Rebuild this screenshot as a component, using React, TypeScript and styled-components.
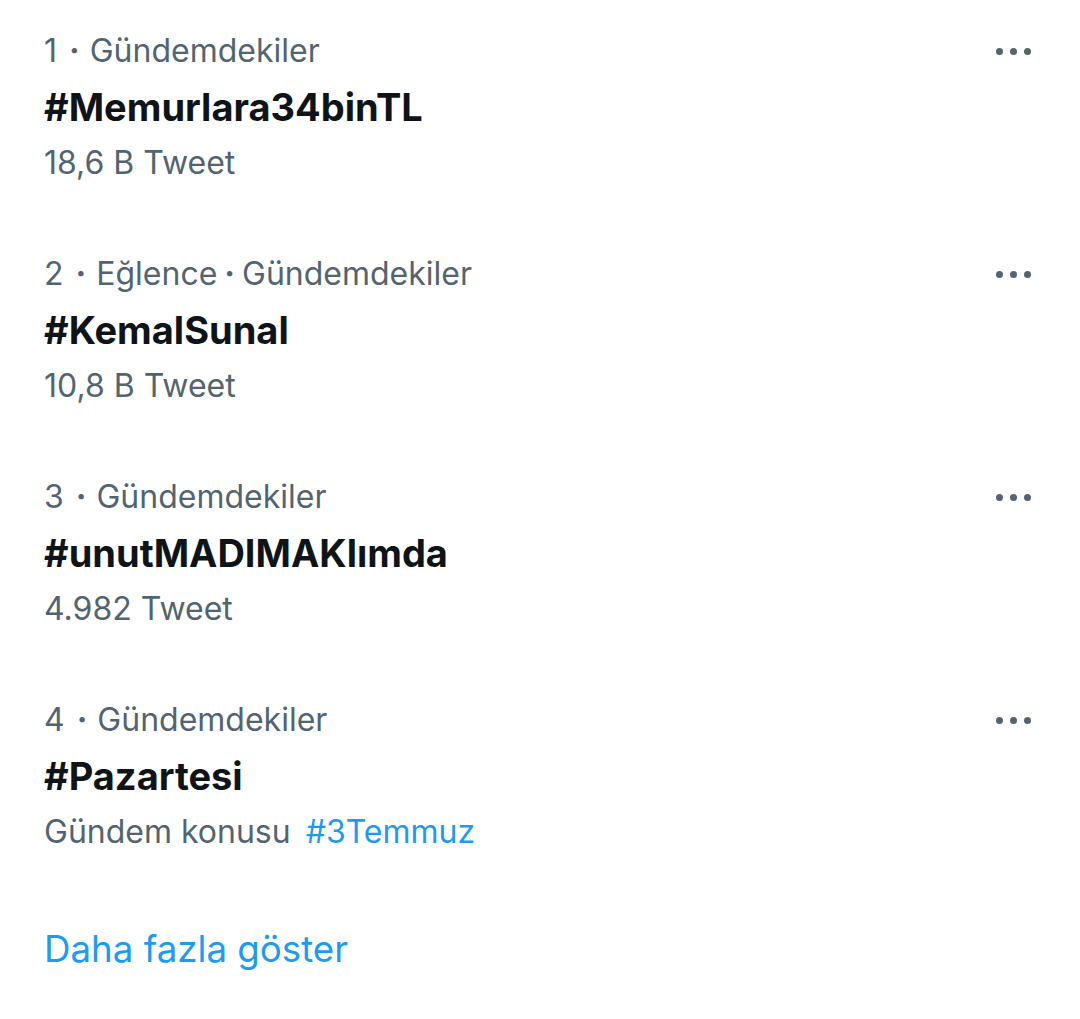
import React from "react";
import styled, { createGlobalStyle } from "styled-components";

const GlobalStyle = createGlobalStyle`
  html, body {
    margin: 0;
    padding: 0;
    background: #ffffff;
  }
  body {
    font-family: Inter, Roboto, "Liberation Sans", sans-serif;
    -webkit-font-smoothing: antialiased;
  }
`;

const Page = styled.div`
  width: 1080px;
  min-height: 1019px;
  background: #fff;
  box-sizing: border-box;
`;

const List = styled.ul`
  list-style: none;
  margin: 0;
  padding: 0;
`;

const TrendRow = styled.li`
  display: flex;
  align-items: flex-start;
  justify-content: space-between;
  padding: 23px 44px 32px 44px;
`;

const TrendBody = styled.div`
  display: flex;
  flex-direction: column;
`;

const Meta = styled.div`
  font-size: 32px;
  line-height: 56px;
  color: #536471;
  white-space: nowrap;
`;

const Sep = styled.span<{ $wide?: boolean }>`
  display: inline-block;
  font-weight: 700;
  margin: ${(p) => (p.$wide ? "0 10px 0 12px" : "0 7px")};
`;

const Title = styled.div`
  font-size: 38px;
  line-height: 56px;
  font-weight: 700;
  color: #0f1419;
  white-space: nowrap;
`;

const Topic = styled.span<{ $link?: boolean }>`
  color: ${(p) => (p.$link ? "#1d9bf0" : "#536471")};
  margin-left: ${(p) => (p.$link ? "15px" : "0")};
`;

const MoreButton = styled.button`
  display: flex;
  align-items: center;
  gap: 7px;
  height: 56px;
  padding: 0;
  margin-right: 5px;
  border: none;
  background: transparent;
  cursor: pointer;
`;

const Dot = styled.span`
  width: 7px;
  height: 7px;
  border-radius: 50%;
  background: #536471;
`;

const ShowMore = styled.a`
  display: block;
  padding: 29px 44px 0 44px;
  font-size: 36.7px;
  line-height: 56px;
  color: #1d9bf0;
  text-decoration: none;
`;

type Trend = {
  rank: number;
  categories: string[];
  title: string;
  count?: string;
  topic?: string;
};

const trends: Trend[] = [
  { rank: 1, categories: ["Gündemdekiler"], title: "#Memurlara34binTL", count: "18,6 B Tweet" },
  { rank: 2, categories: ["Eğlence", "Gündemdekiler"], title: "#KemalSunal", count: "10,8 B Tweet" },
  { rank: 3, categories: ["Gündemdekiler"], title: "#unutMADIMAKlımda", count: "4.982 Tweet" },
  { rank: 4, categories: ["Gündemdekiler"], title: "#Pazartesi", topic: "#3Temmuz" },
];

const App: React.FC = () => {
  return (
    <Page>
      <GlobalStyle />
      <List>
        {trends.map((t) => (
          <TrendRow key={t.title}>
            <TrendBody>
              <Meta>
                {t.rank}
                <Sep $wide>·</Sep>
                {t.categories.map((c, i) => (
                  <React.Fragment key={c}>
                    {i > 0 && <Sep>·</Sep>}
                    {c}
                  </React.Fragment>
                ))}
              </Meta>
              <Title>{t.title}</Title>
              {t.count && <Meta>{t.count}</Meta>}
              {t.topic && (
                <Meta>
                  <Topic>Gündem konusu</Topic>
                  <Topic $link>{t.topic}</Topic>
                </Meta>
              )}
            </TrendBody>
            <MoreButton aria-label="Daha fazla">
              <Dot />
              <Dot />
              <Dot />
            </MoreButton>
          </TrendRow>
        ))}
      </List>
      <ShowMore href="#">Daha fazla göster</ShowMore>
    </Page>
  );
};

export default App;
